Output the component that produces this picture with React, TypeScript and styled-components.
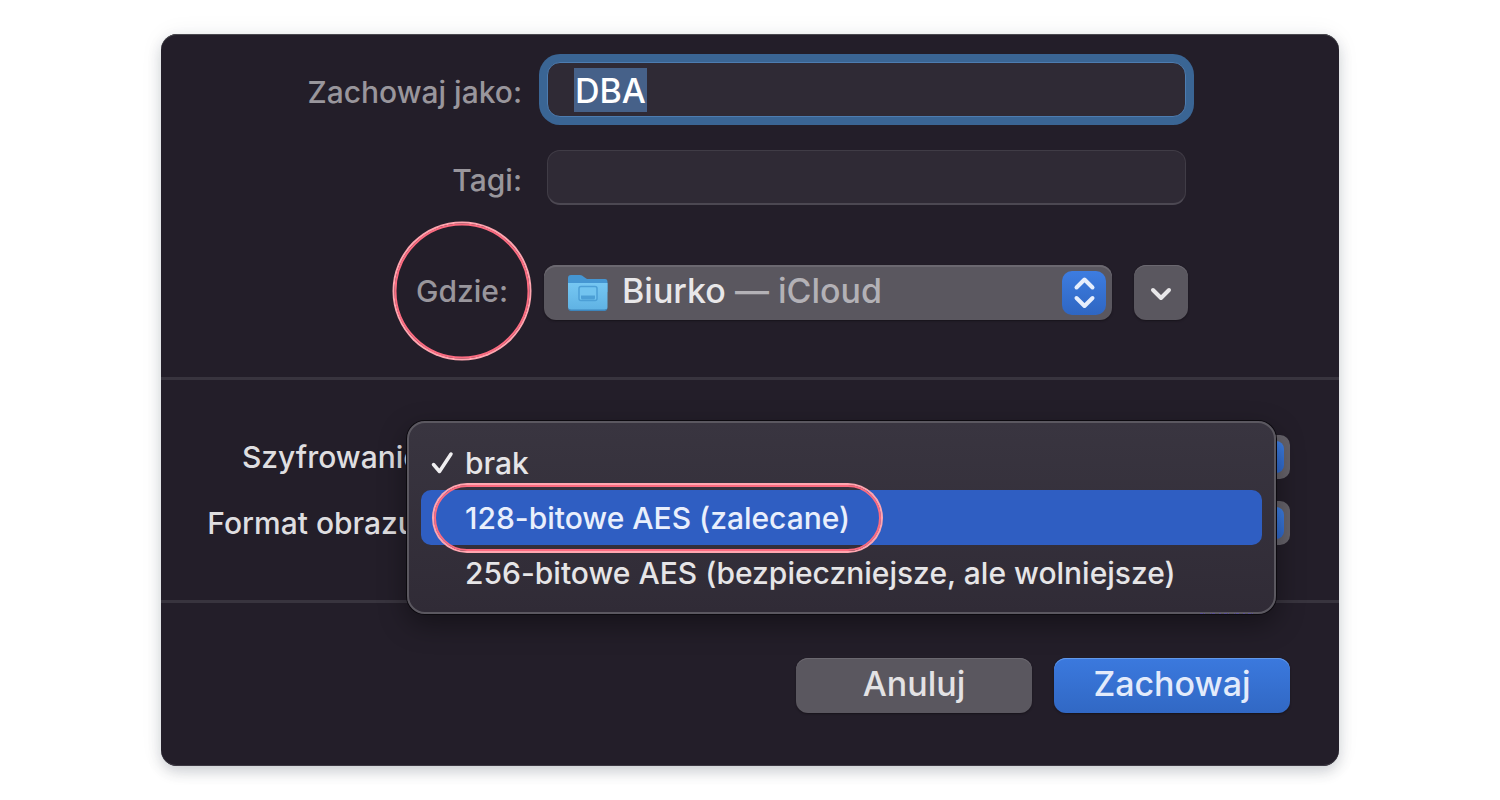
import React from "react";
import styled, { createGlobalStyle, css } from "styled-components";

const GlobalStyle = createGlobalStyle`
  *, *::before, *::after { box-sizing: border-box; }
  body {
    margin: 0;
    background: #ffffff;
    font-family: Inter, "Liberation Sans", sans-serif;
    font-weight: 500;
  }
  button, input, select { font: inherit; }
`;

const Page = styled.main`
  padding: 34px 161px;
`;

const Sheet = styled.form`
  display: flex;
  flex-direction: column;
  border-radius: 16px;
  background: #231e29;
  box-shadow: inset 0 1px 0 #4a494f, inset 0 -1px 0 #3d3943,
    0 6px 14px rgba(40, 50, 65, 0.2), 0 0 24px rgba(40, 50, 65, 0.06);
`;

const FileSection = styled.section`
  display: flex;
  flex-direction: column;
  gap: 33px;
  padding: 28px 153px 57px 0;
`;

const ImageSection = styled.section`
  position: relative;
  display: flex;
  flex-direction: column;
  gap: 22px;
  padding: 55px 49px 55px 0;
  border: solid #38343e;
  border-width: 3px 0;
`;

const Row = styled.div<{ $spaced?: boolean }>`
  display: flex;
  align-items: center;
  margin-top: ${(p) => (p.$spaced ? 27 : 0)}px;
`;

const labelPadding = { none: "0", above: "4px 0 0", below: "0 0 3px" };

const Label = styled.label<{
  $width: number;
  $strong?: boolean;
  $pad?: keyof typeof labelPadding;
}>`
  flex: none;
  width: ${(p) => p.$width}px;
  padding: ${(p) => labelPadding[p.$pad ?? "none"]};
  text-align: right;
  font-size: 30px;
  line-height: 44px;
  white-space: nowrap;
  color: ${(p) => (p.$strong ? "#dfdee0" : "#99969c")};
`;

const annotation = css`
  content: "";
  position: absolute;
  border: 2px solid #fb6b80;
  box-shadow: 0 0 0 2px #ffa6b0;
  pointer-events: none;
`;

const Circled = styled.span`
  position: relative;
  &::after {
    ${annotation}
    width: 135px;
    height: 135px;
    left: 50%;
    top: 50%;
    transform: translate(-50%, -50%);
    border-radius: 50%;
  }
`;

const Pilled = styled.span`
  position: relative;
  &::after {
    ${annotation}
    inset: calc(50% - 33px) -31px;
    border-radius: 34px;
  }
`;

const TextField = styled.div<{ $focused?: boolean }>`
  flex: 1;
  display: flex;
  align-items: center;
  height: 55px;
  margin-left: 25px;
  padding: 0 26px;
  border: 1px solid ${(p) => (p.$focused ? "#4d7cb0" : "#403c46")};
  border-bottom: ${(p) => (p.$focused ? "1px solid #4d7cb0" : "2px solid #4c4852")};
  border-radius: 13px;
  background: #2f2a35;
  box-shadow: ${(p) => (p.$focused ? "0 0 0 8px #3a6594" : "none")};
`;

const TextInput = styled.input`
  field-sizing: content;
  max-width: 100%;
  height: 44px;
  padding: 2px 1px 0;
  border: 0;
  outline: 0;
  color: #ffffff;
  font-size: 34px;
  background: ${(p) => (p.defaultValue ? "#466189" : "transparent")};
`;

const Popup = styled.button`
  flex: 1;
  display: flex;
  align-items: center;
  height: 55px;
  margin: 0 22px 0 36px;
  padding: 0 6px 0 24px;
  border: 0;
  border-radius: 12px;
  background: #5a575f;
  box-shadow: inset 0 2px 0 #6b6870, 0 1px 2px #17131b;
  color: #b3b1b6;
  font-size: 34px;
  line-height: 44px;
`;

const PopupText = styled.span`
  flex: 1;
  margin-left: 14px;
  padding-bottom: 3px;
  text-align: left;
  white-space: nowrap;
`;

const Place = styled.span`
  color: #e8e7e9;
`;

const Expand = styled.button`
  display: grid;
  place-items: center;
  width: 54px;
  height: 55px;
  margin-right: -2px;
  padding: 0;
  border: 0;
  border-radius: 12px;
  background: #5a575f;
  box-shadow: inset 0 1px 0 #6b6870, 0 1px 2px #17131b;
`;

const SelectBox = styled.div`
  flex: 1;
  display: flex;
  height: 44px;
  margin-left: 16px;
  padding: 6px;
  border-radius: 10px;
  background: linear-gradient(90deg, #5a575f, #66636b);
  &::after {
    content: "";
    width: 34px;
    border-radius: 8px;
    background: linear-gradient(#3e80e6, #3069cc);
  }
`;

const Select = styled.select`
  flex: 1;
  min-width: 0;
  appearance: none;
  border: 0;
  background: transparent;
  color: #e8e7e9;
  font-size: 24px;
  line-height: 32px;
`;

const Menu = styled.ul`
  position: absolute;
  left: 246px;
  right: 63px;
  top: 41px;
  margin: 0;
  padding: 12px;
  list-style: none;
  border: 2px solid #5b5860;
  border-radius: 18px;
  background: linear-gradient(#393540, #302b36);
  box-shadow: 0 0 0 1px #0c0a0f, 0 10px 28px rgba(0, 0, 0, 0.4);
`;

const Option = styled.li<{ $active?: boolean }>`
  display: flex;
  align-items: center;
  height: 55px;
  padding-left: 9px;
  border-radius: 10px;
  background: ${(p) => (p.$active ? "#2f5ec2" : "transparent")};
  color: ${(p) => (p.$active ? "#e9effc" : "#e6e5e7")};
  font-size: 30px;
  line-height: 44px;
  white-space: nowrap;
`;

const Mark = styled.span`
  display: flex;
  width: 35px;
`;

const Specks = styled.svg`
  position: absolute;
  right: 84px;
  bottom: -14px;
`;

const Footer = styled.footer`
  display: flex;
  justify-content: flex-end;
  gap: 22px;
  padding: 55px 49px 53px;
`;

const Action = styled.button<{ $primary?: boolean }>`
  width: 236px;
  height: 55px;
  padding: 0 0 3px;
  border: 0;
  border-radius: 12px;
  font-size: 34px;
  line-height: 44px;
  color: ${(p) => (p.$primary ? "#e3ebfb" : "#e3e2e4")};
  background: ${(p) => (p.$primary ? "linear-gradient(#3b79de, #3168c4)" : "#5a575f")};
  box-shadow: inset 0 1px 0 ${(p) => (p.$primary ? "#6299ea" : "#6b6870")}, 0 1px 2px #17131b;
`;

const FolderIcon = () => (
  <svg width="40" height="38" viewBox="0 0 40 38" aria-hidden="true">
    <defs>
      <linearGradient id="front" x1="0" y1="0" x2="0" y2="1">
        <stop offset="0" stopColor="#76c7f2" />
        <stop offset="1" stopColor="#5fb2e4" />
      </linearGradient>
    </defs>
    <path d="M0 4Q0 1 3 1H12Q14 1 16 3L19 5H37Q39.500 5 39.500 8V18H0Z" fill="#4596d2" />
    <path d="M0 9H39.500V33Q39.500 36 36.500 36H3Q0 36 0 33Z" fill="url(#front)" />
    <path d="M0 33Q0 37 3 37H36.500Q39.500 37 39.500 33Q39.500 35.500 36.500 35.500H3Q0 35.500 0 33Z" fill="#3d86bd" />
    <rect x="11" y="12.500" width="18" height="14" rx="2" fill="#72c4f0" stroke="#4c9fd6" strokeWidth="1.500" />
    <path d="M13 21.500H27V24Q27 25.500 25.500 25.500H14.500Q13 25.500 13 24Z" fill="#4c9fd6" />
  </svg>
);

const StepperIcon = () => (
  <svg width="44" height="44" viewBox="0 0 44 44" aria-hidden="true">
    <defs>
      <linearGradient id="stepper" x1="0" y1="0" x2="0" y2="1">
        <stop offset="0" stopColor="#3d7ce0" />
        <stop offset="1" stopColor="#2f66c2" />
      </linearGradient>
    </defs>
    <rect width="44" height="44" rx="10" fill="url(#stepper)" />
    <path d="M14.500 16.500L22.500 8.500L30.500 16.500M14.500 27L22.500 35L30.500 27" fill="none" stroke="#e6eefc" strokeWidth="4" strokeLinecap="round" strokeLinejoin="round" />
  </svg>
);

const ChevronIcon = () => (
  <svg width="22" height="16" viewBox="0 0 22 16" aria-hidden="true">
    <path d="M3 5L11 13L19 5" fill="none" stroke="#e8e7e9" strokeWidth="4" strokeLinecap="round" strokeLinejoin="round" />
  </svg>
);

const CheckIcon = () => (
  <svg width="24" height="24" viewBox="0 0 24 24" aria-hidden="true">
    <path d="M3.500 13.500L9.500 20.500L21 3" fill="none" stroke="#f0eff1" strokeWidth="3.500" strokeLinecap="round" strokeLinejoin="round" />
  </svg>
);

export default function App() {
  return (
    <>
      <GlobalStyle />
      <Page>
        <Sheet onSubmit={(e) => e.preventDefault()}>
          <FileSection>
            <Row>
              <Label $width={361} $pad="above" htmlFor="name">Zachowaj jako:</Label>
              <TextField $focused>
                <TextInput id="name" defaultValue="DBA" />
              </TextField>
            </Row>
            <Row>
              <Label $width={361} $pad="above" htmlFor="tags">Tagi:</Label>
              <TextField>
                <TextInput id="tags" />
              </TextField>
            </Row>
            <Row $spaced>
              <Label $width={347} $pad="below" htmlFor="place">
                <Circled>Gdzie:</Circled>
              </Label>
              <Popup id="place" type="button" aria-haspopup="listbox">
                <FolderIcon />
                <PopupText>
                  <Place>Biurko</Place> — iCloud
                </PopupText>
                <StepperIcon />
              </Popup>
              <Expand type="button" aria-label="Rozwiń">
                <ChevronIcon />
              </Expand>
            </Row>
          </FileSection>

          <ImageSection>
            <Row>
              <Label $width={269} $strong htmlFor="encryption">Szyfrowanie:</Label>
              <SelectBox>
                <Select id="encryption" />
              </SelectBox>
            </Row>
            <Row>
              <Label $width={264} $strong htmlFor="format">Format obrazu:</Label>
              <SelectBox>
                <Select id="format" />
              </SelectBox>
            </Row>
            <Menu role="listbox" aria-label="Szyfrowanie">
              <Option role="option" aria-selected="true">
                <Mark><CheckIcon /></Mark>
                brak
              </Option>
              <Option role="option" aria-selected="false" $active>
                <Mark />
                <Pilled>128-bitowe AES (zalecane)</Pilled>
              </Option>
              <Option role="option" aria-selected="false">
                <Mark />
                256-bitowe AES (bezpieczniejsze, ale wolniejsze)
              </Option>
            </Menu>
            <Specks width="56" height="1" viewBox="0 0 56 1" aria-hidden="true">
              <path d="M1 .5H56" stroke="#5a4f96" strokeDasharray="3 1 1 5 1 1 3 4 2 3" />
            </Specks>
          </ImageSection>

          <Footer>
            <Action type="button">Anuluj</Action>
            <Action type="submit" $primary>Zachowaj</Action>
          </Footer>
        </Sheet>
      </Page>
    </>
  );
}
